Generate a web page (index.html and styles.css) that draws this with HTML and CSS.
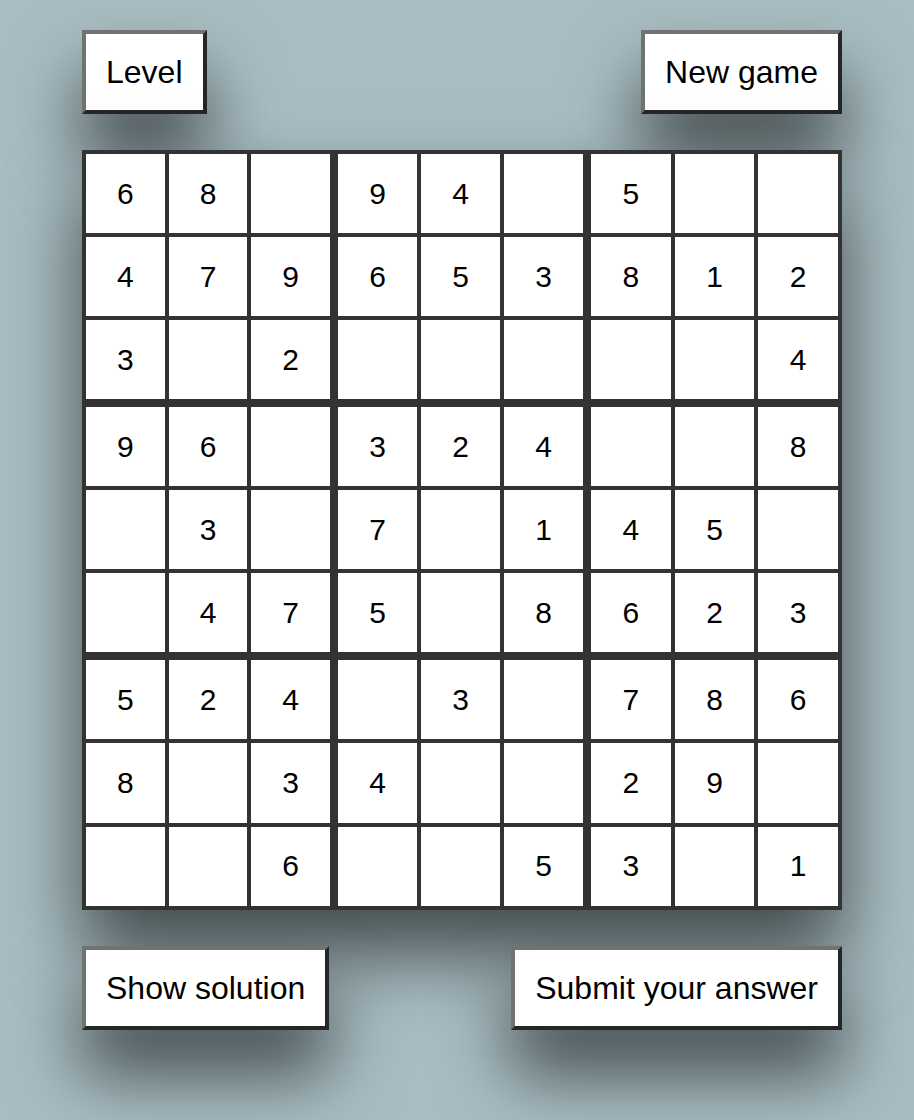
FILE: index.html
```html
<!DOCTYPE html>
<html lang="en">
<head>
<meta charset="utf-8">
<title>Sudoku</title>
<link rel="stylesheet" href="styles.css">
</head>
<body>
<main class="page">
  <div class="bar">
    <button class="btn">Level</button>
    <button class="btn">New game</button>
  </div>
  <div class="board">
    <div class="box"><div class="cell">6</div><div class="cell">8</div><div class="cell"></div><div class="cell">4</div><div class="cell">7</div><div class="cell">9</div><div class="cell">3</div><div class="cell"></div><div class="cell">2</div></div>
    <div class="box"><div class="cell">9</div><div class="cell">4</div><div class="cell"></div><div class="cell">6</div><div class="cell">5</div><div class="cell">3</div><div class="cell"></div><div class="cell"></div><div class="cell"></div></div>
    <div class="box"><div class="cell">5</div><div class="cell"></div><div class="cell"></div><div class="cell">8</div><div class="cell">1</div><div class="cell">2</div><div class="cell"></div><div class="cell"></div><div class="cell">4</div></div>
    <div class="box"><div class="cell">9</div><div class="cell">6</div><div class="cell"></div><div class="cell"></div><div class="cell">3</div><div class="cell"></div><div class="cell"></div><div class="cell">4</div><div class="cell">7</div></div>
    <div class="box"><div class="cell">3</div><div class="cell">2</div><div class="cell">4</div><div class="cell">7</div><div class="cell"></div><div class="cell">1</div><div class="cell">5</div><div class="cell"></div><div class="cell">8</div></div>
    <div class="box"><div class="cell"></div><div class="cell"></div><div class="cell">8</div><div class="cell">4</div><div class="cell">5</div><div class="cell"></div><div class="cell">6</div><div class="cell">2</div><div class="cell">3</div></div>
    <div class="box"><div class="cell">5</div><div class="cell">2</div><div class="cell">4</div><div class="cell">8</div><div class="cell"></div><div class="cell">3</div><div class="cell"></div><div class="cell"></div><div class="cell">6</div></div>
    <div class="box"><div class="cell"></div><div class="cell">3</div><div class="cell"></div><div class="cell">4</div><div class="cell"></div><div class="cell"></div><div class="cell"></div><div class="cell"></div><div class="cell">5</div></div>
    <div class="box"><div class="cell">7</div><div class="cell">8</div><div class="cell">6</div><div class="cell">2</div><div class="cell">9</div><div class="cell"></div><div class="cell">3</div><div class="cell"></div><div class="cell">1</div></div>
  </div>
  <div class="bar">
    <button class="btn">Show solution</button>
    <button class="btn">Submit your answer</button>
  </div>
</main>
</body>
</html>
```
FILE: styles.css
```css
html, body {
  margin: 0;
  padding: 0;
}
body {
  background: #a8bdc2;
  font-family: "Liberation Sans", Arial, sans-serif;
  color: #000;
  min-height: 1120px;
}
.page {
  width: 760px;
  margin-left: 82px;
  padding-top: 30px;
  display: flex;
  flex-direction: column;
  gap: 36px;
}
.bar {
  display: flex;
  justify-content: space-between;
  align-items: flex-start;
}
.btn {
  font-family: "Liberation Sans", Arial, sans-serif;
  font-size: 32px;
  line-height: 36px;
  color: #000;
  background: #fff;
  padding: 20px 20px;
  margin: 0;
  border-width: 4px;
  border-style: solid;
  border-color: #727272 #262626 #262626 #727272;
  box-shadow: 0 44px 70px rgba(0, 0, 0, 0.6);
  cursor: pointer;
}
.board {
  box-sizing: border-box;
  width: 760px;
  height: 760px;
  background: #333;
  padding: 4px;
  display: grid;
  grid-template-columns: 244px 245px 247px;
  grid-template-rows: 245px 245px 246px;
  gap: 8px;
  box-shadow: 0 44px 70px rgba(0, 0, 0, 0.6);
}
.box {
  display: grid;
  grid-template-columns: repeat(3, 1fr);
  grid-template-rows: repeat(3, 1fr);
  gap: 4px;
}
.cell {
  background: #fff;
  display: flex;
  align-items: center;
  justify-content: center;
  font-size: 30px;
}
```
